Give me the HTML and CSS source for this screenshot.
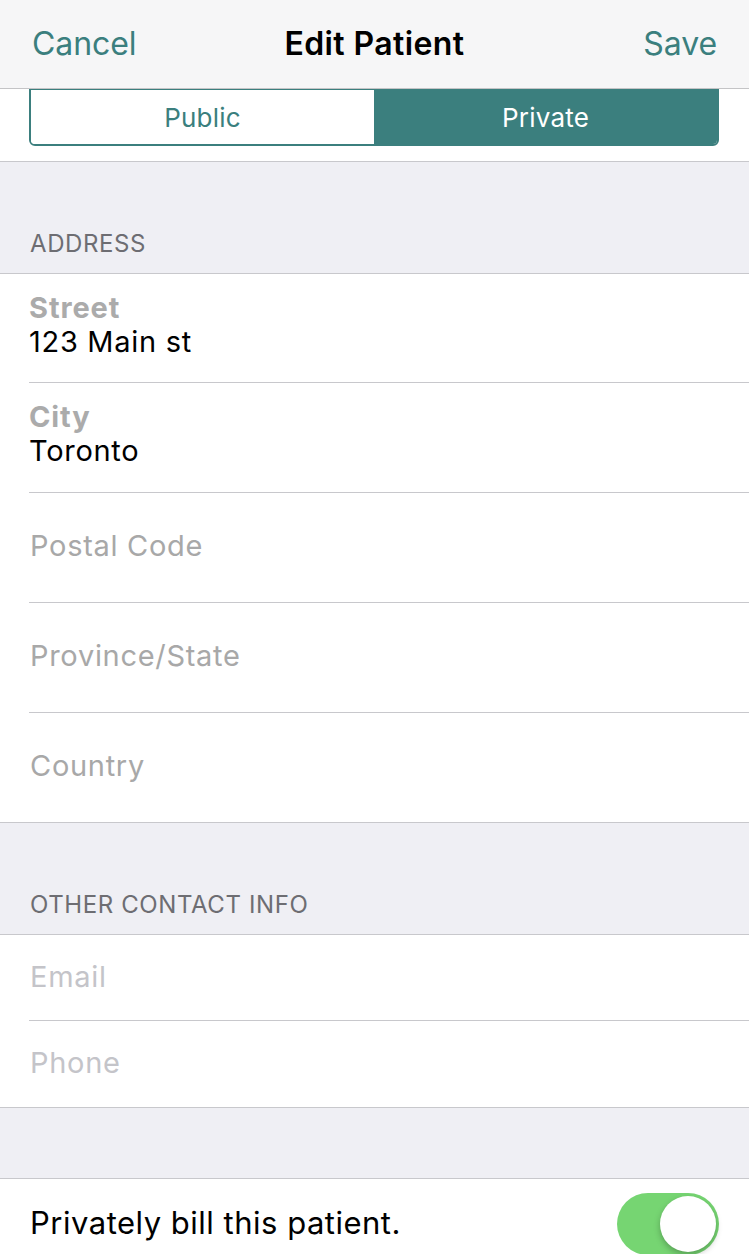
FILE: index.html
```html
<!DOCTYPE html>
<html>
<head>
<meta charset="utf-8">
<link rel="stylesheet" href="styles.css">
</head>
<body>
<div class="screen">
  <header class="navbar">
    <span class="nav-btn">Cancel</span>
    <span class="nav-title">Edit Patient</span>
    <span class="nav-btn">Save</span>
  </header>
  <div class="seg-wrap">
    <div class="segmented">
      <div class="seg">Public</div>
      <div class="seg active">Private</div>
    </div>
  </div>
  <div class="section-head tall"><span>ADDRESS</span></div>
  <div class="group">
    <div class="row filled first"><div class="label">Street</div><div class="value">123 Main st</div></div>
    <div class="row filled"><div class="label">City</div><div class="value">Toronto</div></div>
    <div class="row"><div class="placeholder">Postal Code</div></div>
    <div class="row"><div class="placeholder">Province/State</div></div>
    <div class="row last"><div class="placeholder">Country</div></div>
  </div>
  <div class="section-head tall"><span>OTHER CONTACT INFO</span></div>
  <div class="group">
    <div class="row short"><div class="placeholder light">Email</div></div>
    <div class="row short last"><div class="placeholder light">Phone</div></div>
  </div>
  <div class="section-head spacer"></div>
  <div class="group">
    <div class="row toggle-row last">
      <span class="toggle-label">Privately bill this patient.</span>
      <span class="switch"><span class="knob"></span></span>
    </div>
  </div>
</div>
</body>
</html>
```
FILE: styles.css
```css
* { box-sizing: border-box; }
html, body { margin: 0; padding: 0; }
body {
  font-family: Inter, "Noto Sans", "Liberation Sans", sans-serif;
  background: #efeff4;
  width: 749px;
  height: 1254px;
  overflow: hidden;
}
.screen { width: 749px; }
.navbar {
  height: 89px;
  background: #f6f6f7;
  border-bottom: 1px solid #c4c4c6;
  display: flex;
  align-items: center;
  justify-content: space-between;
  padding: 0 32px 2px 32px;
  position: relative;
}
.nav-btn {
  color: #3b7f7e;
  font-size: 32px;
  letter-spacing: -0.1px;
}
.nav-title {
  position: absolute;
  left: 0; right: 0;
  top: 0; bottom: 2px;
  display: flex;
  align-items: center;
  justify-content: center;
  font-size: 32px;
  font-weight: 600;
  color: #000;
  letter-spacing: 0.4px;
  pointer-events: none;
}
.seg-wrap {
  background: #fff;
  height: 73px;
  padding: 0 30px 0 29px;
  border-bottom: 1px solid #c8c8cc;
}
.segmented {
  display: flex;
  height: 57px;
  border: 2px solid #3b7f7e;
  border-top-width: 1px;
  border-radius: 0 0 6px 6px;
  overflow: hidden;
}
.seg {
  flex: 1;
  display: flex;
  align-items: center;
  justify-content: center;
  font-size: 26px;
  color: #3b7f7e;
  background: #fff;
  letter-spacing: 0.2px;
}
.seg.active { background: #3b7f7e; color: #fff; }
.section-head {
  display: flex;
  align-items: flex-end;
  padding: 0 30px 15px;
  border-bottom: 1px solid #c8c8cc;
  font-size: 24px;
  color: #6d6d72;
  letter-spacing: 0.6px;
}
.section-head.tall { height: 112px; }
.section-head.spacer { height: 71px; }
.group { background: #fff; border-bottom: 1px solid #c8c8cc; }
.row {
  height: 110px;
  margin-left: 29px;
  border-bottom: 1px solid #c8c8cc;
  display: flex;
  flex-direction: column;
  justify-content: center;
}
.row.first { height: 109px; }
.row.last { border-bottom: none; height: 109px; }
.row.short { height: 86px; }
.row.short.last { height: 86px; }
.row.filled { justify-content: flex-start; padding-top: 17px; }
.label {
  font-size: 29px;
  font-weight: 700;
  color: #ababab;
  line-height: 34px;
  letter-spacing: 0.9px;
}
.value {
  font-size: 29px;
  color: #000;
  line-height: 34px;
  letter-spacing: 0.7px;
}
.placeholder {
  font-size: 29px;
  color: #a8a8a8;
  line-height: 34px;
  padding-left: 1px;
  letter-spacing: 0.7px;
  margin-top: -4px;
}
.placeholder.light { color: #c4c4c9; margin-top: -2px; }
.row.toggle-row {
  flex-direction: row;
  align-items: center;
  justify-content: space-between;
  padding-right: 30px;
  height: 88px;
  margin-left: 30px;
}
.toggle-label { font-size: 31px; color: #000; letter-spacing: 0.5px; margin-top: -2px; }
.switch {
  width: 102px;
  height: 62px;
  border-radius: 31px;
  background: #76d572;
  position: relative;
  margin-top: 2px;
}
.knob {
  position: absolute;
  right: 3px;
  top: 3px;
  width: 56px;
  height: 56px;
  border-radius: 50%;
  background: #fff;
  box-shadow: 0 3px 6px rgba(0,0,0,0.25);
}
```
